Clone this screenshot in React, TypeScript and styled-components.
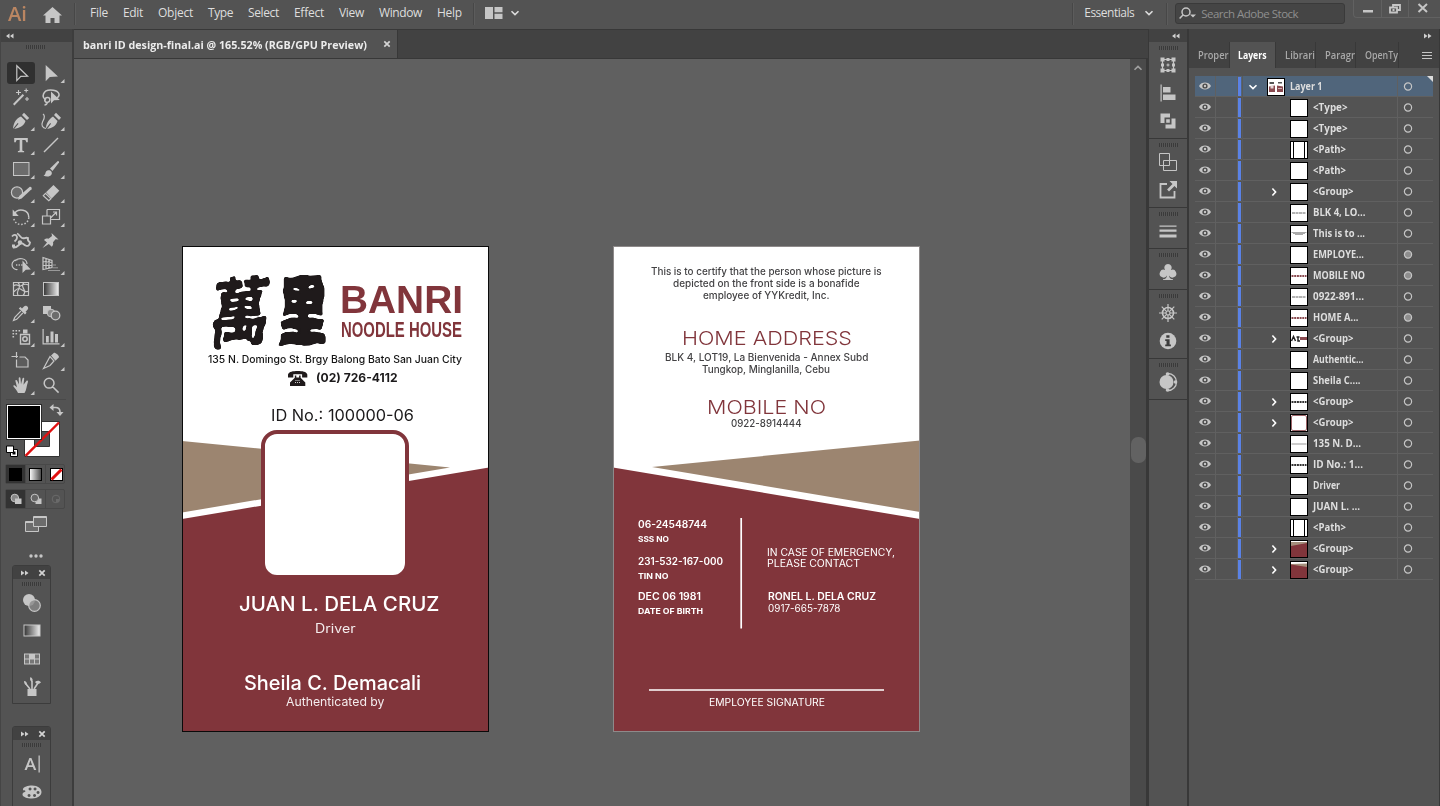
import React, { useLayoutEffect, useRef, useState } from "react";
import styled, { createGlobalStyle, css } from "styled-components";

const c = {
  chrome: "#535353",
  dark: "#424242",
  line: "#383838",
  canvas: "#606060",
  icon: "#c6c6c6",
  text: "#dedede",
  maroon: "#81353b",
  tan: "#9c8570",
  blue: "#5a82e6",
};
const ui = `"Open Sans", "Noto Sans", sans-serif`;
const display = `Inter, "Liberation Sans", sans-serif`;

const GlobalStyle = createGlobalStyle`
  * { box-sizing: border-box; }
  body { margin: 0; background: ${c.chrome}; overflow: hidden; }
`;

/* ---------- text fitted to a given measure ---------- */

const FitBox = styled.span<{ $w: number }>`
  display: block;
  width: ${(p) => p.$w}px;
  flex: none;
  white-space: pre;
`;
const FitInner = styled.span`
  display: inline-block;
  transform-origin: 0 50%;
`;

function Fit({ w, track, children }: { w: number; track?: boolean; children: string }) {
  const ref = useRef<HTMLSpanElement>(null);
  const [style, setStyle] = useState<React.CSSProperties>({});
  useLayoutEffect(() => {
    const natural = ref.current!.getBoundingClientRect().width;
    setStyle(
      track
        ? { letterSpacing: `${(w - natural) / children.length}px` }
        : { transform: `scaleX(${w / natural})` }
    );
  }, []);
  return (
    <FitBox $w={w}>
      <FitInner ref={ref} style={style}>
        {children}
      </FitInner>
    </FitBox>
  );
}

/* ---------- shell ---------- */

const Shell = styled.div`
  width: 1440px;
  height: 806px;
  display: flex;
  flex-direction: column;
  overflow: hidden;
  background: ${c.chrome};
  color: ${c.text};
  font-family: ${ui};
  font-size: 12px;
`;
const Workspace = styled.div`
  flex: 1;
  min-height: 0;
  display: flex;
  background: ${c.line};
`;

/* ---------- top bar ---------- */

const TopBar = styled.header`
  height: 29px;
  flex: none;
  display: flex;
  align-items: flex-start;
  background: ${c.chrome};
`;
const Brand = styled.div`
  width: 34px;
  padding-left: 8px;
  color: #bb8662;
  font: 600 20.500px/26px "Open Sans", sans-serif;
`;
const HomeSlot = styled.div`
  width: 40px;
  padding: 7px 0 0 9px;
`;
const Divider = styled.i`
  width: 1px;
  height: 22px;
  margin-top: 3px;
  background: #474747;
  box-shadow: 1px 0 #5c5c5c;
`;
const Menu = styled.nav`
  width: 398px;
  display: flex;
  gap: 15px;
  padding-left: 15px;
  line-height: 26px;
  font-size: 12px;
`;
const LayoutSwitch = styled.div`
  width: 599px;
  display: flex;
  align-items: center;
  gap: 8px;
  padding: 7px 0 0 11px;
`;
const Essentials = styled.div`
  width: 93px;
  display: flex;
  gap: 11px;
  padding-left: 11px;
  line-height: 26px;
  align-items: center;
`;
const Search = styled.div`
  width: 170px;
  height: 21px;
  margin: 3px 0 0 8px;
  display: flex;
  align-items: center;
  gap: 4px;
  padding-left: 3px;
  border: 1px solid #3a3a3a;
  border-radius: 3px;
  background: #454545;
  color: #8f8f8f;
  font-size: 11.5px;
`;
const WindowButtons = styled.div`
  width: 87px;
  height: 18px;
  margin-left: 8px;
  display: grid;
  grid-template-columns: 27px 27px 32px;
  border: 1px solid #616161;
  border-top: 0;
  border-right: 0;
  border-radius: 0 0 0 4px;
`;
const WindowButton = styled.div`
  display: flex;
  justify-content: center;
  border-left: 1px solid #616161;
  &:first-child { border-left: 0; }
  &:last-child { padding-right: 3px; }
`;

/* ---------- shared panel parts ---------- */

const PanelHead = styled.div<{ $end?: boolean }>`
  height: 13px;
  flex: none;
  display: flex;
  align-items: center;
  justify-content: ${(p) => (p.$end ? "flex-end" : "flex-start")};
  padding: 0 7px 0 5px;
  background: ${c.dark};
`;
const Grip = styled.i`
  display: block;
  flex: none;
  width: 19px;
  height: 4px;
  background: repeating-linear-gradient(90deg, #3a3a3a 0 1px, #565656 1px 2px);
`;
const Svg = styled.svg`
  display: block;
  flex: none;
  overflow: visible;
`;

const DoubleArrow = ({ right }: { right?: boolean }) => (
  <Svg width="8" height="6" viewBox="0 0 8 6" fill="#d0d0d0">
    {right ? (
      <path d="M0 .5l3.500 2.500L0 5.500zM4 .5l3.500 2.500L4 5.500z" />
    ) : (
      <path d="M3.500 .5L0 3l3.500 2.500zM7.500 .5L4 3l3.500 2.500z" />
    )}
  </Svg>
);
const Chevron = ({ dir = "down", color = "#dcdcdc" }: { dir?: "down" | "up" | "right"; color?: string }) => (
  <Svg width="8" height="8" viewBox="0 0 8 8" fill="none" stroke={color} strokeWidth="1.6">
    <path d={dir === "down" ? "M.5 2.2L4 5.6l3.5-3.4" : dir === "up" ? "M.5 5.8L4 2.4l3.5 3.4" : "M2.4.5L5.6 4 2.4 7.5"} />
  </Svg>
);

/* ---------- tool glyphs, drawn around the origin ---------- */

const o = { fill: "none", stroke: c.icon, strokeWidth: 1.2 };
const tools: { id: string; flyout?: boolean; art: React.ReactNode }[] = [
  { id: "selection", art: <path d="M-4.2-7.3V7.6L-.2 3.4 6.6 3.2z" {...o} /> },
  { id: "direct", flyout: true, art: <path d="M-5.3-8V8.2L-1.2 4.1 7 3.6z" /> },
  {
    id: "wand",
    art: (
      <>
        <path d="M-7.3 7.8L2.4-2.2" stroke={c.icon} strokeWidth="2" />
        <path d="M-2.5-7v5M-5-4.5h5M5.2-8.5v4M3.2-6.5h4M6 0v4M4 2h4" stroke={c.icon} strokeWidth="1.1" />
      </>
    ),
  },
  {
    id: "lasso",
    art: (
      <>
        <path d="M-5 3c-5-3-3-10 4.500-10C8-7 10-2 6 1M-3.500 5.500C-8 5-6.500 0-3 .5c3 .5 2 5-.5 4.500M-3.500 5c-.5 2-1.500 3-3 3" {...o} strokeWidth="1.500" />
        <path d="M0-5.500V6.500L3 3.300 8.800 3z" />
      </>
    ),
  },
  {
    id: "pen",
    flyout: true,
    art: (
      <>
        <path d="M-8 7.800C-7.500 3-6-2 0-4.500L4.500 0C3 5-1.500 7-6.800 8l4.300-5.200L-3.300 2z" />
        <path d="M1-6l2-2.200L8.200-3 6 -1z" />
      </>
    ),
  },
  {
    id: "curvature",
    flyout: true,
    art: (
      <>
        <path d="M-5 7.500C-5 3-3-1 2-4.500L6.500 0C5 5 1.500 7-3.800 8L0 2.800-.8 2z" />
        <path d="M3-6l2-2.200L10-3.200 8-1z" />
        <path d="M-8-7c3 2 1 5-.5 8s0 6 3.500 6.500" {...o} />
      </>
    ),
  },
  { id: "type", flyout: true, art: <path d="M-6.800-7H6.800v4.200H5.200c-.2-1.600-.6-2.200-2-2.200H1.300V5c0 .8.4 1 1.800 1.100V7.200h-6.200V6.100C-1.700 6-1.300 5.800-1.300 5V-5h-1.900c-1.400 0-1.800.6-2 2.200h-1.600z" /> },
  { id: "line", flyout: true, art: <path d="M-7 7L7-7" stroke={c.icon} strokeWidth="1.500" /> },
  { id: "rectangle", flyout: true, art: <rect x="-7.500" y="-6.500" width="15.500" height="13" fill="#6c6c6c" stroke={c.icon} /> },
  {
    id: "brush",
    flyout: true,
    art: (
      <>
        <path d="M-1-.5L6.800-8c.8 0 1.400.6 1.200 1.500L1.500 2z" />
        <path d="M-7.500 6.500c3-1 1-4.500 4.500-5.300C-.5.7 1.800 3 .5 5.500-1 8-5 8-7.500 6.500z" />
      </>
    ),
  },
  {
    id: "shaper",
    flyout: true,
    art: (
      <>
        <circle cx="-4" cy="-.5" r="5.600" fill="#6c6c6c" stroke={c.icon} strokeWidth="1.200" />
        <path d="M-3 6.800L-1.800 3 8.500-6c1.400-.6 2.800.8 2 2.200L.6 5.600z" />
      </>
    ),
  },
  {
    id: "eraser",
    flyout: true,
    art: (
      <>
        <path d="M-5-.8L2.500-8 8.300-2.200.8 5.500z" />
        <path d="M-5.500.3L-7.700 2.600-2.200 7.600 0 5.700z" {...o} />
      </>
    ),
  },
  {
    id: "rotate",
    flyout: true,
    art: (
      <>
        <path d="M-6.500-3.500C-3-9 8-8 7.800.5" {...o} strokeWidth="1.500" />
        <path d="M7.800.5C7.500 5 4 7.500 0 7.500S-6.500 5-7.200 1.500" {...o} strokeWidth="1.500" strokeDasharray="1.500 1.800" />
        <path d="M-8.300-7.500V-1h6z" />
      </>
    ),
  },
  {
    id: "scale",
    flyout: true,
    art: <path d="M-8.500-1h8v8h-8zM-4-7.500H8.500v10H.2M-4-7.500V-1M0 .5L5.500-5M2-5h3.500v3.500" {...o} />,
  },
  {
    id: "width",
    flyout: true,
    art: (
      <>
        <path d="M-9-4.500c2-2.500 4.500-2 5 .5.400 2-.6 3-2.500 4.500M-8 6.500c4 .5 5-2 7-3.500 2.500-1.800 3.500.5 5.500 1.500S8.500 5 9 1.500C7.500.5 6.500-1.500 7-3c-2.500-1-4 1-6 0S-2-7-4-7.500" {...o} strokeWidth="1.800" />
        <circle cx="-1" cy="1.500" r="2.200" />
        <path d="M-9 3.500h3v3h-3z" />
      </>
    ),
  },
  {
    id: "pushpin",
    flyout: true,
    art: <path d="M-8.500 7l4.500-5.500-3-2.500c1.500-1.500 3-1.800 4.500-1.300L1-5 .5-8 7.500-1.500 4.500-1.800 2 1.200C2.500 3 2 4.500.8 5.800L-2.200 3z" />,
  },
  {
    id: "shapebuilder",
    flyout: true,
    art: (
      <>
        <path d="M-3.500-5A4.800 4.800 0 1 0-3.500 4.500M-6-4C-3-8 6-7 6-1" {...o} />
        <path d="M-5 0h8" stroke={c.icon} strokeWidth="1.300" strokeDasharray="1.300 1.300" />
        <path d="M1.500-4.500V8L4.800 4.800 9.800 4.600z" />
      </>
    ),
  },
  {
    id: "perspective",
    flyout: true,
    art: (
      <>
        <path d="M-8-7.500L1-4.500v7L-8 4.500zM-5-6.500v10.300M-2-5.500v8.500M-8-3.500l9 1M-8 .5h9" {...o} />
        <path d="M1.500 0H5M1.500 2.800H7M-3 5.500H9" stroke="#999" />
      </>
    ),
  },
  {
    id: "mesh",
    art: (
      <path
        d="M-7.500-6.500h15v13h-15zM-7.500-3c4-3 5 1 7 0s4-3 8-1M-7.500 3c3-2 4-5 7-3s5 4 8 2M-3-6.500c3 3 1 6 0 8s-1 3 0 5M3-6.500c-3 3-1 5 0 7s1 4-1 6"
        {...o}
      />
    ),
  },
  { id: "gradient", art: <rect x="-7.500" y="-6.500" width="15" height="13" fill="url(#toolGradient)" stroke={c.icon} /> },
  {
    id: "eyedropper",
    flyout: true,
    art: (
      <>
        <path d="M1-4.500l2-2C5-8.800 8.700-5.500 6.500-3.300L4.600-1.200l1 1L4 1.400-2.200-4.600-.6-6z" />
        <path d="M-.2-1.800L-6.200 4.400-7.500 7.500l3.200-1.200L1.800 0" {...o} />
      </>
    ),
  },
  {
    id: "blend",
    art: (
      <>
        <rect x="-8" y="-7" width="8" height="8" />
        <circle cx="0" cy="0" r="3.800" fill="#8a8a8a" stroke={c.icon} />
        <circle cx="4.500" cy="2.500" r="4.300" fill="#6c6c6c" stroke={c.icon} strokeWidth="1.300" />
      </>
    ),
  },
  {
    id: "spray",
    flyout: true,
    art: (
      <>
        <path d="M-.5-2.500h9v9.500h-9z" {...o} strokeWidth="1.400" />
        <circle cx="4" cy="2" r="2.200" {...o} strokeWidth="1.500" />
        <path d="M2-7.500h4.500v4H2zM-8.500-7h1.600v1.600h-1.600zM-5.500-7h1.600v1.600h-1.600zM-2.500-7h1.600v1.600h-1.600zM-8.500-4h1.600v1.600h-1.600zM-5.500-4h1.600v1.600h-1.600zM-8.500-1h1.600V.6h-1.600z" />
      </>
    ),
  },
  { id: "graph", flyout: true, art: <path d="M-8.500-8h1.200V6.200H8.500v1.300h-17zM-5-1h2.800v6.500H-5zM-.5-5.500h3v11h-3zM4-3h3v8.500H4z" /> },
  { id: "artboard", art: <path d="M-9.500-4.500H-3M-4.500-9v6M-4.500-1.500v7.500h11.500V-1L4-4H-1.500" {...o} fill="#6c6c6c" fillOpacity=".4" /> },
  {
    id: "slice",
    flyout: true,
    art: (
      <>
        <path d="M-7.500 7.500L-1-4.500 3 0-1 4.500z" {...o} />
        <path d="M0-5.500L3-8.300c2 0 5 2.500 5 4.500L4.500 -.3z" />
      </>
    ),
  },
  {
    id: "hand",
    flyout: true,
    art: (
      <path d="M-3 8C-4 5.500-6 3.500-7.500 1.500c-.6-1 .8-1.600 1.600-.8L-4 2.200-5.600-4c-.2-1.100 1.300-1.400 1.700-.4L-2-.5l-.3-6.300c0-1.200 1.700-1.200 1.800 0L0-.8 1.500-6.600c.3-1.100 1.900-.8 1.700.4L2.500-.2 5.400-4c.7-.9 1.900-.1 1.500.9C5.500 1 5.500 5 3.500 8z" />
    ),
  },
  { id: "zoom", art: <path d="M3-1.800A4.900 4.900 0 1 1-6.800-1.800 4.900 4.900 0 1 1 3-1.800zM1.700 1.800L7.600 7.600" {...o} strokeWidth="1.500" /> },
];

const Toolbar = styled.aside`
  width: 74px;
  flex: none;
  display: flex;
  flex-direction: column;
  background: ${c.chrome};
  border-left: 1px solid #454545;
  border-right: 2px solid #3d3d3d;
`;
const GripRow = styled.div`
  height: 19px;
  padding: 3px 0 0 25px;
`;
const ToolGrid = styled.div`
  display: grid;
  grid-template-columns: 30px 30px;
  grid-auto-rows: 24px;
  padding-left: 5px;
`;
const Tool = styled.div<{ $on?: boolean }>`
  display: flex;
  align-items: center;
  justify-content: center;
  ${(p) =>
    p.$on &&
    css`
      margin: 1px 1px 1px 1px;
      border-radius: 3px;
      background: #303030;
    `}
`;
const Rule = styled.i`
  height: 1px;
  margin: 2px 6px 4px 5px;
  background: #494949;
`;
const SwatchRow = styled.div`
  height: 60px;
  padding-left: 5px;
`;
const Segments = styled.div`
  display: grid;
  grid-template-columns: repeat(3, 20px);
  height: 20px;
  width: 60px;
  margin: 0 0 5px 4px;
  border: 1px solid #484848;
  border-radius: 2px;
`;
const Segment = styled.div<{ $on?: boolean }>`
  display: flex;
  align-items: center;
  justify-content: center;
  border-right: 1px solid #484848;
  background: ${(p) => (p.$on ? "#333" : "transparent")};
  &:last-child { border-right: 0; }
`;
const ScreenMode = styled.div`
  padding: 2px 0 0 24px;
  display: flex;
  flex-direction: column;
  gap: 22px;
`;

const LeftTools = () => (
  <Toolbar>
    <PanelHead>
      <DoubleArrow />
    </PanelHead>
    <GripRow>
      <Grip />
    </GripRow>
    <ToolGrid>
      {tools.map((t) => (
        <Tool key={t.id} $on={t.id === "selection"}>
          <Svg width="22" height="22" viewBox="-11 -11 22 22" fill={c.icon}>
            <defs>
              <linearGradient id="toolGradient">
                <stop offset="0" stopColor="#333" />
                <stop offset="1" stopColor="#eee" />
              </linearGradient>
            </defs>
            {t.art}
            {t.flyout && <path d="M13.500 6v4h-4z" />}
          </Svg>
        </Tool>
      ))}
    </ToolGrid>
    <Rule />
    <SwatchRow>
      <Svg width="60" height="56" viewBox="0 0 60 56">
        <path d="M18.500 17.500h35v35h-35z" fill="#fff" stroke="#333" />
        <path d="M28.500 27.500h15v15h-15z" fill={c.chrome} stroke="#333" />
        <path d="M19.500 51.800L53 18.500" stroke="#e01010" strokeWidth="2.400" />
        <rect x=".5" y=".5" width="35" height="35" fill="#000" stroke="#2b2b2b" />
        <rect x="1.500" y="1.500" width="33" height="33" fill="none" stroke="#fff" />
        <path d="M47 3.500h2.500c3 0 4.500 1 4.500 4.500" {...o} strokeWidth="1.600" />
        <path d="M43.500 3.500L47.500 0v7zM54 12L50.500 8h7z" fill={c.icon} />
        <path d="M5.500 46.500h5v5h-5z" fill="#000" stroke="#fff" strokeWidth="2" />
        <path d="M4.500 45.500h7v7h-7z" fill="none" stroke="#000" />
        <path d="M.5 42h7v6.500h-7z" fill="#fff" stroke="#000" />
      </Svg>
    </SwatchRow>
    <Segments>
      <Segment $on>
        <Svg width="13" height="13"><rect width="13" height="13" fill="#000" /></Svg>
      </Segment>
      <Segment>
        <Svg width="13" height="13">
          <defs>
            <linearGradient id="chipGradient">
              <stop offset="0" stopColor="#fff" />
              <stop offset="1" stopColor="#444" />
            </linearGradient>
          </defs>
          <rect x=".5" y=".5" width="12" height="12" fill="url(#chipGradient)" stroke="#000" />
        </Svg>
      </Segment>
      <Segment>
        <Svg width="13" height="13">
          <rect x=".5" y=".5" width="12" height="12" fill="#fff" stroke="#000" />
          <path d="M1.500 11.500l10-10" stroke="#e01010" strokeWidth="3" />
        </Svg>
      </Segment>
    </Segments>
    <Segments>
      <Segment $on>
        <Svg width="12" height="12">
          <circle cx="4.800" cy="5" r="3.800" fill="#888" stroke={c.icon} />
          <path d="M5 5.500h6.500v5.500H5z" fill={c.icon} />
        </Svg>
      </Segment>
      <Segment>
        <Svg width="12" height="12">
          <path d="M5.500 5.500h6v5.500h-6z" fill={c.icon} />
          <circle cx="4.800" cy="5" r="3.800" fill="#666" stroke={c.icon} />
        </Svg>
      </Segment>
      <Segment>
        <Svg width="12" height="12">
          <circle cx="6" cy="6" r="3.800" fill="none" stroke="#6a6a6a" />
          <path d="M6 6h3v3H6z" fill="#6a6a6a" />
        </Svg>
      </Segment>
    </Segments>
    <ScreenMode>
      <Svg width="22" height="16" fill="#6c6c6c" stroke={c.icon}>
        <path d="M.5 5.500h13v10H.5zM.5 6.500h13" />
        <path d="M8.500.5h13v10h-13zM8.500 1.500h13" />
      </Svg>
      <Svg width="16" height="4" fill={c.icon}>
        <circle cx="6" cy="2" r="1.700" />
        <circle cx="11" cy="2" r="1.700" />
        <circle cx="16" cy="2" r="1.700" />
      </Svg>
    </ScreenMode>
  </Toolbar>
);

/* ---------- floating mini panels ---------- */

const Floating = styled.div<{ $top: number; $h: number }>`
  position: absolute;
  left: 12px;
  top: ${(p) => p.$top}px;
  width: 39px;
  height: ${(p) => p.$h}px;
  display: flex;
  flex-direction: column;
  align-items: center;
  border: 1px solid #3c3c3c;
  border-radius: 3px 3px 0 0;
  background: ${c.chrome};
  overflow: hidden;
`;
const FloatHead = styled.div`
  align-self: stretch;
  height: 13px;
  flex: none;
  display: flex;
  align-items: center;
  justify-content: space-between;
  padding: 0 5px 0 8px;
  margin-bottom: 3px;
  background: ${c.dark};
`;
const FloatSlot = styled.div`
  height: 28px;
  display: flex;
  align-items: center;
  &:nth-child(3) { margin-top: 3px; }
`;
const CloseX = ({ size = 6 }: { size?: number }) => (
  <Svg width={size} height={size} viewBox="0 0 6 6" stroke="#d4d4d4" strokeWidth="1.700">
    <path d="M.3.3l5.400 5.400M5.700.3L.3 5.700" />
  </Svg>
);
const FloatPanel = ({ top, h, icons }: { top: number; h: number; icons: React.ReactNode[] }) => (
  <Floating $top={top} $h={h}>
    <FloatHead>
      <DoubleArrow right />
      <CloseX />
    </FloatHead>
    <Grip />
    {icons.map((art, i) => (
      <FloatSlot key={i}>
        <Svg width="20" height="20" viewBox="-10 -10 20 20" fill={c.icon}>
          {art}
        </Svg>
      </FloatSlot>
    ))}
  </Floating>
);

const floatA = [
  <>
    <circle cx="-3" cy="-3" r="6" />
    <circle cx="2.500" cy="2.500" r="5.800" fill="#8a8a8a" fillOpacity=".8" stroke={c.icon} strokeWidth="1.200" />
  </>,
  <rect x="-8" y="-6" width="16" height="11" fill="url(#toolGradient)" stroke={c.icon} />,
  <>
    <rect x="-8" y="-5.500" width="16" height="11" />
    <path d="M-7-4.500h4v4h-4zM-2 .5h4v4h-4zM3-4.500h4v4H3zM-7 .5h4v4h-4zM3 .5h4v4H3z" fill="#777" />
  </>,
  <>
    <path d="M-4.500 2h9v7h-9z" />
    <path d="M-2 2L-6-3M0 2v-8M2 2l4-6" stroke={c.icon} strokeWidth="1.600" />
    <path d="M-8-6c2 0 3.500 2 3 4.500C-7-2-8-3.500-8-6zM-1.500-10c2 1 3 3 1.500 5-2-1-2.500-3-1.500-5zM3-5c2-2 5-1.500 6 .5-2 2-4.500 2-6-.5z" />
  </>,
];
const floatB = [
  <path d="M-7.500 6L-2.600-6h2L4.300 6H2L.9 2.900h-5L-5.300 6zM-3.300 1.200H.1L-1.600-3.700zM6.500-8.500h1.300V8.500H6.500z" fillRule="evenodd" />,
  <path
    d="M0-6.500c6 0 9.500 3 9.500 6.500S6 6.500 0 6.500C-5 6.500-9.500 5-9.500 2.500S-6 0-6.500-1-9.500-1-9-3-4-6.500 0-6.500zM-2-4.500a1.500 1.500 0 1 0 .1 0zM3-4.500A1.500 1.500 0 1 0 3.100-4.500zM6-1A1.500 1.500 0 1 0 6.100-1zM2.500 2A1.500 1.500 0 1 0 2.600 2zM-3 2A1.500 1.500 0 1 0-2.900 2z"
    fillRule="evenodd"
  />,
];

/* ---------- document ---------- */

const Document = styled.main`
  width: 1074px;
  flex: none;
  display: flex;
  flex-direction: column;
`;
const DocTabs = styled.div`
  height: 30px;
  flex: none;
  display: flex;
  background: ${c.dark};
  border-top: 1px solid ${c.line};
  border-bottom: 1px solid ${c.line};
`;
const DocTab = styled.div`
  width: 324px;
  display: flex;
  align-items: center;
  gap: 17px;
  padding-left: 9px;
  background: ${c.chrome};
  border-right: 1px solid ${c.line};
  color: #ececec;
  font-weight: 700;
  font-size: 11px;
`;
const View = styled.div`
  flex: 1;
  min-height: 0;
  display: flex;
`;
const Canvas = styled.div`
  position: relative;
  width: 1056px;
  background: ${c.canvas};
  overflow: hidden;
`;
const Scrollbar = styled.div`
  width: 16px;
  display: flex;
  flex-direction: column;
  align-items: center;
  padding-top: 5px;
  background: #4a4a4a;
`;
const Thumb = styled.i`
  width: 15px;
  height: 26px;
  margin-top: 365px;
  border-radius: 7px;
  background: #626262;
`;

const Artboard = styled.section<{ $x: number; $edge: string }>`
  position: absolute;
  left: ${(p) => p.$x}px;
  top: 187px;
  width: 307px;
  height: 486px;
  background: #fff;
  overflow: hidden;
  font-family: ${display};
  &::after {
    content: "";
    position: absolute;
    inset: 0;
    border: 1px solid ${(p) => p.$edge};
  }
`;
const Shapes = styled.svg`
  position: absolute;
  inset: 0;
`;
const Placed = styled.div<{ $x: number; $y: number; $size: number; $weight: number; $color: string; $family?: string }>`
  position: absolute;
  left: ${(p) => p.$x}px;
  top: ${(p) => p.$y - p.$size / 2}px;
  line-height: ${(p) => p.$size}px;
  font-size: ${(p) => p.$size}px;
  font-weight: ${(p) => p.$weight};
  color: ${(p) => p.$color};
  ${(p) => p.$family && `font-family: ${p.$family};`}
`;
const Photo = styled.div`
  position: absolute;
  left: 79px;
  top: 184px;
  width: 148px;
  height: 148.500px;
  border: 4.500px solid ${c.maroon};
  border-radius: 16px;
  background: #fff;
`;
const BrushText = styled.text<{ $weight: number; $bleed: number }>`
  font: ${(p) => p.$weight} 60px "Noto Sans CJK TC", sans-serif;
  text-anchor: middle;
  fill: #1f1a1b;
  stroke: #1f1a1b;
  stroke-width: ${(p) => p.$bleed}px;
  stroke-linejoin: round;
`;

/* text, left, cap centre, measure, size, weight, colour, family */
type Item = [string, number, number, number, number, number, string, string?];
const arial = `"Liberation Sans", Arial, sans-serif`;
const ink = "#434244";
const front: Item[] = [
  ["BANRI", 157.500, 54.500, 123, 38.500, 700, c.maroon, arial],
  ["NOODLE HOUSE", 158.700, 84, 121, 22, 700, c.maroon, arial],
  ["135 N. Domingo St. Brgy Balong Bato San Juan City", 26, 114, 254, 10.500, 500, "#141414"],
  ["(02) 726-4112", 134, 133, 81.500, 11.700, 700, "#1c1a1b"],
  ["ID No.: 100000-06", 88.500, 169.200, 143, 16, 400, "#1c1a1b"],
  ["JUAN L. DELA CRUZ", 57, 357.700, 200.500, 20, 500, "#fff"],
  ["Driver", 132.800, 383.700, 40.500, 12.700, 400, "#f4eced"],
  ["Sheila C. Demacali", 61.500, 436.800, 177, 20, 500, "#fff"],
  ["Authenticated by", 103.700, 455.700, 98.500, 12, 400, "#f4eced"],
];
const back: Item[] = [
  ["This is to certify that the person whose picture is", 38.300, 25.300, 230.500, 10, 500, ink],
  ["depicted on the front side is a bonafide", 60.300, 37.300, 186.500, 10, 500, ink],
  ["employee of YYKredit, Inc.", 90, 49.300, 126.500, 10, 500, ink],
  ["HOME ADDRESS", 68.500, 92.300, 170, 19.300, 300, c.maroon],
  ["BLK 4, LOT19, La Bienvenida - Annex Subd", 51.700, 111.300, 203.500, 10, 500, ink],
  ["Tungkop, Minglanilla, Cebu", 89.300, 123.300, 128, 10, 500, ink],
  ["MOBILE NO", 94, 161.200, 119, 19.300, 300, c.maroon],
  ["0922-8914444", 118, 177.300, 70.500, 10, 500, ink],
  ["06-24548744", 25, 278.300, 69, 10, 600, "#fff"],
  ["SSS NO", 25, 293.300, 31, 8, 700, "#fff"],
  ["231-532-167-000", 25, 315.300, 85, 10, 600, "#fff"],
  ["TIN NO", 25, 330.300, 30.500, 8, 700, "#fff"],
  ["DEC 06 1981", 25, 350.300, 63, 10, 600, "#fff"],
  ["DATE OF BIRTH", 25, 365.300, 65, 8, 700, "#fff"],
  ["IN CASE OF EMERGENCY,", 154, 306.300, 128, 10, 400, "#fff"],
  ["PLEASE CONTACT", 154, 317.300, 93, 10, 400, "#fff"],
  ["RONEL L. DELA CRUZ", 154.500, 350.300, 108, 10, 600, "#fff"],
  ["0917-665-7878", 154.500, 362.300, 72.500, 10, 400, "#fff"],
  ["EMPLOYEE SIGNATURE", 95.700, 456.300, 116, 10, 400, "#fff"],
];
const Texts = ({ items }: { items: Item[] }) => (
  <>
    {items.map(([t, x, y, w, size, weight, color, family]) => (
      <Placed key={t} $x={x} $y={y} $size={size} $weight={weight} $color={color} $family={family}>
        <Fit w={w}>{t}</Fit>
      </Placed>
    ))}
  </>
);

const Doc = () => (
  <Document>
    <DocTabs>
      <DocTab>
        <Fit w={284}>banri ID design-final.ai @ 165.52% (RGB/GPU Preview)</Fit>
        <CloseX />
      </DocTab>
    </DocTabs>
    <View>
      <Canvas>
        <Artboard $x={108} $edge="#0a0a0a">
          <Shapes width="307" height="486">
            <defs>
              <filter id="ink" x="-20%" y="-20%" width="140%" height="140%" colorInterpolationFilters="sRGB">
                <feTurbulence type="fractalNoise" baseFrequency=".06" numOctaves="1" seed="4" result="noise" />
                <feDisplacementMap in="SourceGraphic" in2="noise" scale="9" xChannelSelector="R" yChannelSelector="G" result="rough" />
                <feGaussianBlur in="rough" stdDeviation="1.100" />
                <feComponentTransfer>
                  <feFuncA type="linear" slope="5" intercept="-2" />
                </feComponentTransfer>
              </filter>
            </defs>
            <path d="M0 195L268 221.500 0 266.500z" fill={c.tan} />
            <path d="M0 273L307 221.500V486H0z" fill={c.maroon} />
            <path
              d="M106 128.500c1-3 5-3.500 9.700-3.500s8.700.5 9.600 3.500v3h-5.200v-3.200h-8.800v3.200H106zM112.800 129.500h1.500v2h2.800v-2h1.500v2.200l4.700 4.800v3.500h-15.300v-3.500l4.800-4.800z"
              fill="#1f1a1b"
            />
            <path d="M113.500 134.500h4.500M113 136.500h5.500" stroke="#fff" strokeWidth=".8" strokeDasharray="1 1" />
            <g filter="url(#ink)">
              <BrushText $weight={700} $bleed={0.3} y="22" transform="translate(58.500 66.500) rotate(-5) skewX(-10) scale(1 1.240)">萬</BrushText>
              <BrushText $weight={900} $bleed={1.2} y="22" transform="translate(120.500 65.500) rotate(-3) skewX(-3) scale(.86 1.260)">里</BrushText>
            </g>
          </Shapes>
          <Photo />
          <Texts items={front} />
        </Artboard>
        <Artboard $x={539} $edge="#8e8a8a">
          <Shapes width="307" height="486">
            <path d="M39 221L307 194.500V266z" fill={c.tan} />
            <path d="M0 221.500L307 273V486H0z" fill={c.maroon} />
            <path d="M128.200 272v110.500M36 444h235" stroke="#fff" strokeWidth="1.700" />
          </Shapes>
          <Texts items={back} />
        </Artboard>
      </Canvas>
      <Scrollbar>
        <Chevron dir="up" color="#a0a0a0" />
        <Thumb />
      </Scrollbar>
    </View>
  </Document>
);

/* ---------- icon dock ---------- */

const Dock = styled.aside`
  width: 38px;
  margin-left: 1px;
  flex: none;
  display: flex;
  flex-direction: column;
  background: ${c.chrome};
`;
const DockGroup = styled.div`
  display: flex;
  flex-direction: column;
  align-items: center;
  padding: 4px 0 3px;
  border-bottom: 1px solid ${c.line};
`;
const DockGrip = styled(Grip)`
  margin-bottom: 1px;
`;
const DockSlot = styled.div`
  height: 28px;
  display: flex;
  align-items: center;
`;
const dockGroups: React.ReactNode[][] = [
  [
    <>
      <path d="M-5.500-5.500h11v11h-11z" {...o} />
      <path d="M-7.500-7.500h4v4h-4zM3.500-7.500h4v4h-4zM-7.500 3.500h4v4h-4zM3.500 3.500h4v4h-4zM-1.500-7h3v3h-3zM-1.500 4h3v3h-3zM-7-1.500h3v3h-3zM4-1.500h3v3H4zM-.5-1.500h1v3h-1zM-1.500-.5h3v1h-3z" />
    </>,
    <path d="M-7.500-8.500h1.200v17h-1.200zM-5-6h7.500v5.500H-5zM-5 1.500H7.500V7H-5z" />,
    <>
      <path d="M-7.500-7.500H2v4h-5.500V2h-4zM-1.800-1.800h3.600v3.600h-3.600z" />
      <path d="M3.500-2.500h4v10H-2.500v-4h6z" />
    </>,
  ],
  [
    <path d="M-8.500-8.500h10v12h-10zM-4.500-1.500H8.500v10h-13z" fill={c.chrome} stroke={c.icon} />,
    <>
      <path d="M-1-6h-6.500V7.500H6.500V1" {...o} strokeWidth="1.800" />
      <path d="M1.500-9H9v7.500L6.500-4 1 1.500-.9-.4 4.500-6z" />
    </>,
  ],
  [<path d="M-8.500-5.500h17v1.200h-17zM-8.500-1.500h17v2.200h-17zM-8.500 3.500h17v3h-17z" />],
  [<path d="M0-8a3.700 3.700 0 0 1 2.900 6A3.900 3.900 0 1 1 1 3.500C1.200 6 2.500 7 5 7.300V8H-5v-.7C-2.500 7-1.200 6-1 3.500A3.900 3.900 0 1 1-2.900-2 3.700 3.700 0 0 1 0-8z" />],
  [
    <>
      <circle r="5.500" {...o} strokeWidth="1.600" />
      <circle r="2" {...o} />
      <path d="M0-9V-2M0 2v7M-9 0h7M2 0h7M-6.300-6.300l5 5M1.300 1.300l5 5M6.300-6.300l-5 5M-1.300 1.300l-5 5" {...o} />
    </>,
    <>
      <circle r="8.300" />
      <path d="M-1.700-5.800h3.200v2.600h-3.200zM-2.800-1.700h4.400v5.200h1.300v1.700h-5.700V3.500h1.300V0h-1.300z" fill="#3c3c3c" />
    </>,
  ],
  [
    <>
      <circle cx="-1.500" r="7" />
      <path d="M0-8.500A8.300 8.300 0 0 1 0 8.500" {...o} strokeWidth="1.300" />
      <circle cx="-.5" cy="-8" r="1.800" />
      <circle cx="7.500" cy="0" r="1.800" />
      <circle cx="-.5" cy="8" r="1.800" />
    </>,
  ],
];

/* ---------- layers panel ---------- */

const Panel = styled.aside`
  width: 250px;
  margin-left: 2px;
  flex: none;
  display: flex;
  flex-direction: column;
  background: ${c.chrome};
`;
const PanelTabs = styled.div`
  height: 26px;
  flex: none;
  display: flex;
  background: ${c.dark};
  color: #a8a8a8;
  font-size: 10.500px;
  font-weight: 600;
  line-height: 27px;
`;
const PanelTab = styled.div<{ $w: number; $on?: boolean }>`
  width: ${(p) => p.$w}px;
  padding-left: 9px;
  border-right: 1px solid #383838;
  ${(p) =>
    p.$on &&
    css`
      padding-left: 8px;
      background: ${c.chrome};
      color: #fff;
      font-weight: 700;
    `}
`;
const Burger = styled.div`
  flex: 1;
  padding: 10px 0 0 23px;
`;
const Rows = styled.div`
  margin: 8px 0 0 6px;
  width: 238px;
`;
const Row = styled.div<{ $top?: boolean }>`
  height: 21px;
  display: grid;
  grid-template-columns: 21px 22px 5px 155px 35px;
  background: ${(p) => (p.$top ? "#50657b" : c.chrome)};
  border-bottom: 1px solid #606060;
  background-clip: padding-box;
`;
const Cell = styled.div`
  display: flex;
  align-items: center;
  border-right: 1px solid #606060;
`;
const EyeCell = styled(Cell)`
  padding: 0 0 2px 4px;
`;
const ColorCell = styled(Cell)`
  border-right: 1px solid #5a5a5a;
  &::before {
    content: "";
    width: 3px;
    height: 19px;
    background: ${c.blue};
  }
`;
const NameCell = styled(Cell)<{ $nested: boolean }>`
  padding-left: ${(p) => (p.$nested ? 27 : 6)}px;
  color: #dedede;
  font: 700 10px/21px "Open Sans", "Noto Sans", sans-serif;
`;
const Caret = styled.div<{ $w: number }>`
  width: ${(p) => p.$w}px;
`;
const ThumbArt = styled.svg`
  display: block;
  flex: none;
  width: 18px;
  height: 18px;
  margin-right: 5px;
`;
const TargetCell = styled.div<{ $corner?: boolean }>`
  position: relative;
  display: flex;
  align-items: center;
  padding-left: 5px;
  ${(p) =>
    p.$corner &&
    css`
      &::after {
        content: "";
        position: absolute;
        right: 0;
        top: 0;
        border: 3px solid;
        border-color: #ddd #ddd transparent transparent;
      }
    `}
`;

type Art = "all" | "blank" | "frame" | "text" | "para" | "redtext" | "darktext" | "logo" | "photo" | "thin" | "cardA" | "cardB";
const thumbs: Record<Art, React.ReactNode> = {
  blank: null,
  all: (
    <>
      <path d="M2 8.500l6-1V14H2zM10 7.500l6 1V14h-6z" fill="#8a4a50" />
      <path d="M2.500 4h4.500v2H2.500zM11 4h4v1.500h-4z" fill="#555" />
      <path d="M3.500 7.500h3v3h-3zM11 10h4v.7h-4z" fill="#e8d8d8" />
    </>
  ),
  frame: <path d="M3.500 1v16M14.500 1v16" stroke="#000" />,
  text: <path d="M2 9h14" stroke="#666" strokeDasharray="3 .5" />,
  para: <path d="M1.500 7.500h15M3 8.500h12M5 9.500h8" stroke="#aaa" />,
  redtext: <path d="M1.500 9h15" stroke="#8a4a50" strokeWidth="2" strokeDasharray="2 .7" />,
  darktext: <path d="M1.500 9h15" stroke="#333" strokeWidth="1.800" strokeDasharray="2 .7" />,
  logo: (
    <>
      <path d="M1.500 11l2-4.500 2 4.500M6.500 7h3M8 7v4h2" stroke="#222" strokeWidth="1.500" fill="none" />
      <path d="M10 8.500h7" stroke="#8a4a50" strokeWidth="3" />
    </>
  ),
  photo: <rect x="1.500" y="1.500" width="15" height="15" rx="1.500" fill="none" stroke="#9c6468" />,
  thin: <path d="M1.500 9h15" stroke="#999" />,
  cardA: <><path d="M1 1h16v16H1z" fill={c.maroon} /><path d="M1 1h16v2L1 6z" fill="#a58f7c" /><path d="M1 1h16v1L1 2z" fill="#fff" /></>,
  cardB: <><path d="M1 1h16v16H1z" fill={c.maroon} /><path d="M1 1h16v5L1 3.500z" fill="#a58f7c" /><path d="M1 1h16v1.500L1 3z" fill="#fff" /></>,
};
/* name, measure, thumbnail, group, styled appearance */
const layers: [string, number, Art, boolean?, boolean?][] = [
  ["Layer 1", 32.500, "all"],
  ["<Type>", 34.500, "blank"],
  ["<Type>", 34.500, "blank"],
  ["<Path>", 33, "frame"],
  ["<Path>", 33, "blank"],
  ["<Group>", 40.500, "blank", true],
  ["BLK 4, LO...", 52.500, "text"],
  ["This is to ...", 52, "para"],
  ["EMPLOYE...", 51, "blank", false, true],
  ["MOBILE NO", 52, "redtext", false, true],
  ["0922-891...", 51, "text"],
  ["HOME A...", 45.500, "redtext", false, true],
  ["<Group>", 40.500, "logo", true],
  ["Authentic...", 50.500, "blank"],
  ["Sheila C....", 47.500, "blank"],
  ["<Group>", 40.500, "darktext", true],
  ["<Group>", 40.500, "photo", true],
  ["135 N. D...", 48, "thin"],
  ["ID No.: 1...", 50, "darktext"],
  ["Driver", 27, "blank"],
  ["JUAN L. ...", 47, "blank"],
  ["<Path>", 33, "frame"],
  ["<Group>", 40.500, "cardA", true],
  ["<Group>", 40.500, "cardB", true],
];

const Layers = () => (
  <Rows>
    {layers.map(([name, w, art, group, styledTarget], i) => (
      <Row key={i} $top={i === 0}>
        <EyeCell>
          <Svg width="12" height="8" viewBox="0 0 12 8">
            <path d="M0 4C2.500-.6 9.500-.6 12 4 9.500 8.600 2.500 8.600 0 4z" fill={c.icon} />
            <circle cx="6" cy="4" r="2.600" fill="#4a4a4a" />
            <circle cx="6" cy="4" r="1.200" fill={c.icon} />
          </Svg>
        </EyeCell>
        <Cell />
        <ColorCell />
        <NameCell $nested={i > 0}>
          <Caret $w={i === 0 ? 18 : 20}>
            {i === 0 ? <Chevron color="#fff" /> : group ? <Chevron dir="right" color="#fff" /> : null}
          </Caret>
          <ThumbArt viewBox="0 0 18 18">
            <rect x=".5" y=".5" width="17" height="17" fill="#fff" stroke="#000" />
            {thumbs[art]}
          </ThumbArt>
          <Fit w={w}>{name}</Fit>
        </NameCell>
        <TargetCell $corner={i === 0}>
          <Svg width="10" height="9">
            <circle cx="5" cy="4.500" r="3.600" fill={styledTarget ? "#8e8e8e" : "none"} stroke={c.icon} strokeWidth="1.200" />
          </Svg>
        </TargetCell>
      </Row>
    ))}
  </Rows>
);

/* ---------- app ---------- */

const menu: [string, number][] = [
  ["File", 18],
  ["Edit", 20],
  ["Object", 35],
  ["Type", 25],
  ["Select", 31],
  ["Effect", 30],
  ["View", 25],
  ["Window", 43],
  ["Help", 25],
];

export default function App() {
  return (
    <>
      <GlobalStyle />
      <Shell>
        <TopBar>
          <Brand>
            <Fit w={19}>Ai</Fit>
          </Brand>
          <HomeSlot>
            <Svg width="19" height="16" viewBox="0 0 19 16" fill={c.icon}>
              <path d="M9.500 0L19 8.500h-2.500V16h-5v-5h-4v5h-5V8.500H0z" />
            </Svg>
          </HomeSlot>
          <Divider />
          <Menu>
            {menu.map(([name, w]) => (
              <Fit key={name} w={w} track>{name}</Fit>
            ))}
          </Menu>
          <Divider />
          <LayoutSwitch>
            <Svg width="18" height="12" fill={c.icon}>
              <path d="M0 0h8v12H0zM9.500 0H17.500v5.200H9.500zM9.500 6.800H17.500V12H9.500z" />
            </Svg>
            <Chevron />
          </LayoutSwitch>
          <Divider />
          <Essentials>
            <Fit w={50} track>Essentials</Fit>
            <Chevron />
          </Essentials>
          <Divider />
          <Search>
            <Svg width="18" height="13" viewBox="0 0 18 13" fill="none" stroke={c.icon} strokeWidth="1.500">
              <circle cx="7" cy="5" r="4" />
              <path d="M4.200 7.800L.6 11.600" />
              <path d="M11 7.500h6l-3 3z" fill={c.icon} stroke="none" />
            </Svg>
            <Fit w={97} track>Search Adobe Stock</Fit>
          </Search>
          <WindowButtons>
            <WindowButton>
              <Svg width="10" height="14"><path d="M0 10h10v2.500H0z" fill={c.icon} /></Svg>
            </WindowButton>
            <WindowButton>
              <Svg width="12" height="14" fill="none" stroke={c.icon} strokeWidth="1.800">
                <path d="M4 7.500V5h7v5H8.500M1 7.500h7v5H1zM3.500 10h2" />
              </Svg>
            </WindowButton>
            <WindowButton>
              <Svg width="10" height="14"><path d="M.5 4l8.500 8M9 4L.5 12" stroke={c.icon} strokeWidth="2" /></Svg>
            </WindowButton>
          </WindowButtons>
        </TopBar>
        <Workspace>
          <LeftTools />
          <Doc />
          <Dock>
            <PanelHead $end>
              <DoubleArrow />
            </PanelHead>
            {dockGroups.map((group, g) => (
              <DockGroup key={g}>
                <DockGrip />
                {group.map((art, i) => (
                  <DockSlot key={i}>
                    <Svg width="20" height="20" viewBox="-10 -10 20 20" fill={c.icon}>
                      {art}
                    </Svg>
                  </DockSlot>
                ))}
              </DockGroup>
            ))}
          </Dock>
          <Panel>
            <PanelHead $end>
              <DoubleArrow right />
            </PanelHead>
            <PanelTabs>
              <PanelTab $w={41}><Fit w={30.500}>Proper</Fit></PanelTab>
              <PanelTab $w={46} $on><Fit w={28.500}>Layers</Fit></PanelTab>
              <PanelTab $w={40}><Fit w={30}>Librari</Fit></PanelTab>
              <PanelTab $w={40}><Fit w={30}>Paragr</Fit></PanelTab>
              <PanelTab $w={43}><Fit w={33}>OpenTy</Fit></PanelTab>
              <Burger>
                <Svg width="10" height="7" fill={c.icon}><path d="M0 0h10v1H0zM0 3h10v1H0zM0 6h10v1H0z" /></Svg>
              </Burger>
            </PanelTabs>
            <Layers />
          </Panel>
        </Workspace>
        <FloatPanel top={565} h={139} icons={floatA} />
        <FloatPanel top={726} h={100} icons={floatB} />
      </Shell>
    </>
  );
}
